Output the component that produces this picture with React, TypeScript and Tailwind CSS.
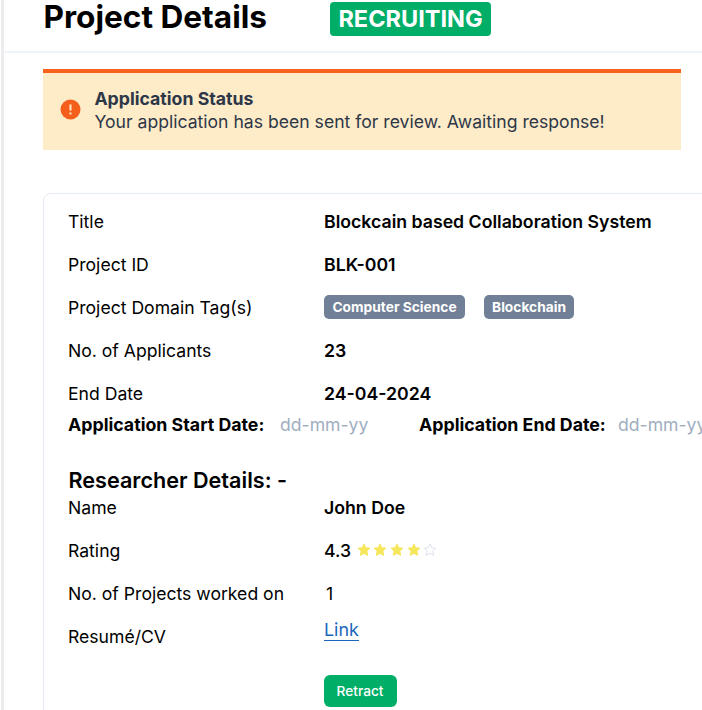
import React from 'react';

const row = 'flex h-[43.1px] items-center';
const label = 'w-[256px] shrink-0 text-[17.6px]';
const value = 'text-[17.7px] font-semibold';

function Row({ name, children }: { name: string; children: React.ReactNode }) {
  return (
    <div className={row}>
      <div className={label}>{name}</div>
      <div className={value}>{children}</div>
    </div>
  );
}

function Star({ filled }: { filled: boolean }) {
  return (
    <svg width="14" height="14" viewBox="0 0 14 14" fill={filled ? '#F6E65A' : 'none'} stroke={filled ? '#F6E65A' : '#DDE3EE'} strokeWidth="1" strokeLinejoin="round">
      <path d="M7 1 8.7 4.8 12.9 5.2 9.8 8.1 10.7 12.4 7 10.3 3.3 12.4 4.2 8.1 1.1 5.2 5.3 4.8Z" />
    </svg>
  );
}

export default function App() {
  return (
    <div className="flex h-[710px] w-[702px] overflow-hidden bg-white font-['Inter',sans-serif] whitespace-nowrap text-black">
      <div className="ml-px w-[3px] shrink-0 bg-[#EDEDEF]" />
      <div className="w-[698px] shrink-0">
        <header className="flex h-[53px] border-b-2 border-[#EFF3FA] pl-[39.5px]">
          <h1 className="w-[286.5px] text-[31.6px] leading-[34px] font-bold">Project Details</h1>
          <div className="mt-[2px] flex h-[34px] w-[161px] items-center justify-center rounded bg-[#00AE68] text-[23.5px] font-bold text-white">RECRUITING</div>
        </header>
        <section className="mt-4 ml-[39.4px] flex h-[81px] w-[637.6px] border-t-4 border-[#F9621D] bg-[#FEEBC8] text-[#2D3748]">
          <svg className="mt-[26px] ml-[17px] shrink-0" width="21" height="21" viewBox="0 0 21 21">
            <circle cx="10.5" cy="10.5" r="10" fill="#F4601B" />
            <path d="M10.5 5.5v6M10.5 13.5v2" stroke="#FEEBC8" strokeWidth="2" />
          </svg>
          <div className="mt-[14px] ml-[13px] text-[17.6px] leading-[23px]">
            <div className="text-[17.7px] font-bold">Application Status</div>
            <div>Your application has been sent for review. Awaiting response!</div>
          </div>
        </section>
        <main className="mt-[43px] ml-[39px] h-[600px] w-[800px] rounded-lg border border-[#E5EBF3] pt-[6.5px] pl-6">
          <Row name="Title"><div className="pt-px">Blockcain based Collaboration System</div></Row>
          <Row name="Project ID">BLK-001</Row>
          <Row name="Project Domain Tag(s)">
            <div className="-mt-[2px] flex gap-[19px] text-[13.75px] font-bold text-white">
              <span className="flex h-[24px] w-[141px] items-center justify-center rounded-[5px] bg-[#718096]">Computer Science</span>
              <span className="flex h-[24px] w-[90px] items-center justify-center rounded-[5px] bg-[#718096]">Blockchain</span>
            </div>
          </Row>
          <Row name="No. of Applicants">23</Row>
          <Row name="End Date">24-04-2024</Row>
          <div className="-mt-[3px] flex text-[17.75px] leading-6">
            <span className="w-[212px] font-bold">Application Start Date:</span>
            <span className="w-[139px] text-[17.6px] text-[#A0AEC0]">dd-mm-yy</span>
            <span className="w-[199px] font-bold">Application End Date:</span>
            <span className="text-[17.6px] text-[#A0AEC0]">dd-mm-yy</span>
          </div>
          <h2 className="mt-[28px] h-[21.5px] pl-[.5px] text-[21.6px] leading-[30px] font-semibold">Researcher Details: -</h2>
          <Row name="Name">John Doe</Row>
          <Row name="Rating">
            <div className="flex items-center font-medium">
              4.3
              <div className="-mt-[2px] ml-[5.5px] flex gap-[2.7px]">
                <Star filled /><Star filled /><Star filled /><Star filled /><Star filled={false} />
              </div>
            </div>
          </Row>
          <Row name="No. of Projects worked on"><span className="pl-[2px] font-normal">1</span></Row>
          <div className="flex h-[59.5px]">
            <div className={`${label} pt-[8px]`}>Resumé/CV</div>
            <a className="h-[25.5px] border-b border-[#1A66BC] text-[17.9px] leading-[28px] text-[#1A66BC]">Link</a>
          </div>
          <button className="ml-[256px] h-[31.5px] w-[73px] rounded-md bg-[#00AE68] text-[13.7px] font-medium text-white"><span className="-ml-px">Retract</span></button>
        </main>
      </div>
    </div>
  );
}
